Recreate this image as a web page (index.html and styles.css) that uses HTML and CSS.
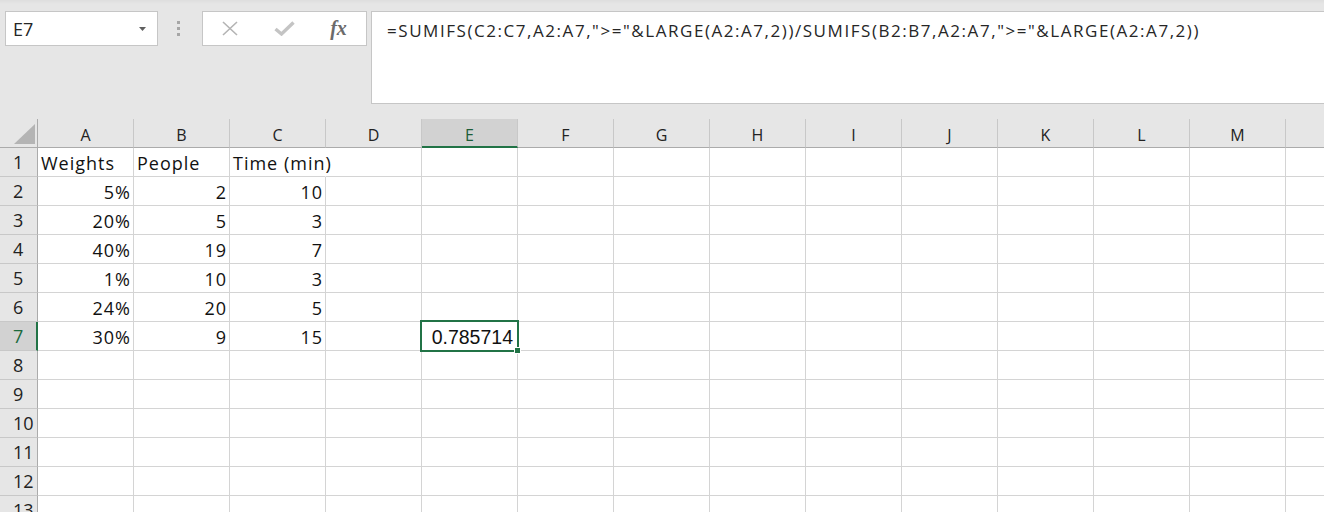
FILE: index.html
```html
<!DOCTYPE html>
<html lang="en">

<head>
    <meta charset="UTF-8">
    <meta name="viewport" content="width=device-width, initial-scale=1.0">
    <title>Book1 - Excel</title>
    <link rel="stylesheet" href="styles.css">
</head>

<body>

    <div class="toolbar">
        <div class="name-box">
            <span class="name-text">E7</span>
            <svg class="drop" width="7" height="4" viewBox="0 0 7 4"><path d="M0 0 H7 L3.5 4 Z" fill="#5f5f5f"/></svg>
        </div>
        <div class="grip">
            <span></span><span></span><span></span>
        </div>
        <div class="fn-box">
            <span class="fn-btn">
                <svg width="16" height="15" viewBox="0 0 16 15"><path d="M1 1 L15 14 M15 1 L1 14" stroke="#b4b4b4" stroke-width="1.6" fill="none"/></svg>
            </span>
            <span class="fn-btn">
                <svg width="21" height="15" viewBox="0 0 21 15"><path d="M1.5 8 L7.5 13 L19.5 1.5" stroke="#c4c4c4" stroke-width="3.4" fill="none"/></svg>
            </span>
            <span class="fn-btn fx">fx</span>
        </div>
        <div class="formula">=SUMIFS(C2:C7,A2:A7,"&gt;="&amp;LARGE(A2:A7,2))/SUMIFS(B2:B7,A2:A7,"&gt;="&amp;LARGE(A2:A7,2))</div>
    </div>

    <div class="sheet" id="sheet"></div>

    <script>
        const columns = ['A', 'B', 'C', 'D', 'E', 'F', 'G', 'H', 'I', 'J', 'K', 'L', 'M', ''];
        const data = {
            1: ['Weights', 'People', 'Time (min)'],
            2: ['5%', '2', '10'],
            3: ['20%', '5', '3'],
            4: ['40%', '19', '7'],
            5: ['1%', '10', '3'],
            6: ['24%', '20', '5'],
            7: ['30%', '9', '15']
        };
        const activeCol = 'E';
        const activeRow = 7;

        function buildSheet() {
            const sheet = document.getElementById('sheet');

            const corner = document.createElement('div');
            corner.className = 'corner';
            corner.innerHTML = '<span class="select-all"></span>';
            sheet.appendChild(corner);

            columns.forEach(col => {
                const head = document.createElement('div');
                head.className = 'col-head';
                if (col === activeCol) head.classList.add('active');
                head.textContent = col;
                sheet.appendChild(head);
            });

            for (let r = 1; r <= 13; r++) {
                const rowHead = document.createElement('div');
                rowHead.className = 'row-head';
                if (r === activeRow) rowHead.classList.add('active');
                rowHead.textContent = r;
                sheet.appendChild(rowHead);

                columns.forEach((col, i) => {
                    const cell = document.createElement('div');
                    cell.className = 'cell';
                    const value = data[r] ? data[r][i] : undefined;
                    if (value !== undefined) {
                        cell.textContent = value;
                        cell.classList.add(r === 1 ? 'text' : 'num');
                        if (r === 1 && i === 2) cell.classList.add('spill');
                    }
                    if (col === activeCol && r === activeRow) {
                        cell.classList.add('num', 'result');
                        cell.innerHTML = '0.785714<span class="selection"><span class="handle"></span></span>';
                    }
                    sheet.appendChild(cell);
                });
            }
        }

        buildSheet();
    </script>

</body>

</html>
```

FILE: styles.css
```css
body {
    margin: 0;
    height: 512px;
    overflow: hidden;
    background-color: #ffffff;
    font-family: 'Open Sans', 'Noto Sans', sans-serif;
    color: #222222;
}

.toolbar {
    height: 119px;
    box-sizing: border-box;
    display: flex;
    align-items: flex-start;
    padding: 11px 0 0 5px;
    background: linear-gradient(#dedede, #e6e6e6 4px);
}

.name-box {
    width: 153px;
    height: 35px;
    box-sizing: border-box;
    border: 1px solid #c6c6c6;
    background-color: #ffffff;
    display: flex;
    align-items: center;
    justify-content: space-between;
    padding: 0 11px 0 7px;
}

.name-text {
    font-size: 18px;
    color: #262626;
}

.drop {
    margin-top: 1px;
}

.grip {
    width: 44px;
    height: 35px;
    box-sizing: border-box;
    padding-right: 4px;
    display: flex;
    flex-direction: column;
    align-items: center;
    justify-content: center;
    gap: 3px;
}

.grip span {
    width: 3px;
    height: 3px;
    background-color: #a6a6a6;
}

.fn-box {
    width: 165px;
    height: 35px;
    box-sizing: border-box;
    border: 1px solid #c6c6c6;
    background-color: #ffffff;
    display: flex;
}

.fn-btn {
    width: 54px;
    display: flex;
    align-items: center;
    justify-content: center;
}

.fn-btn.fx {
    width: 55px;
    font-family: 'Liberation Serif', serif;
    font-style: italic;
    font-weight: bold;
    font-size: 20px;
    color: #6b6b6b;
    padding-bottom: 1px;
}

.formula {
    flex: 1;
    height: 93px;
    margin-left: 4px;
    box-sizing: border-box;
    border: 1px solid #c6c6c6;
    border-right: none;
    background-color: #ffffff;
    padding: 7px 0 0 15px;
    font-size: 17px;
    letter-spacing: 1.55px;
    white-space: nowrap;
    color: #262626;
}

.sheet {
    display: grid;
    grid-template-columns: 38px repeat(13, 96px) 40px;
    grid-auto-rows: 29px;
}

.sheet > div {
    box-sizing: border-box;
    border-right: 1px solid #d4d4d4;
    border-bottom: 1px solid #d4d4d4;
    white-space: nowrap;
}

.sheet > .corner {
    background-color: #e6e6e6;
    border-right: 1px solid #ababab;
    border-bottom: 1px solid #ababab;
    display: flex;
    justify-content: flex-end;
    align-items: flex-end;
    padding: 0 2px 3px 0;
}

.select-all {
    width: 0;
    height: 0;
    border-left: 21px solid transparent;
    border-bottom: 20px solid #b4b4b4;
}

.sheet > .col-head {
    background-color: #e6e6e6;
    border-right: 1px solid #c8c8c8;
    border-bottom: 1px solid #ababab;
    text-align: center;
    font-size: 16px;
    line-height: 28px;
    padding-top: 2px;
    color: #222222;
}

.sheet > .col-head.active {
    background-color: #d2d2d2;
    border-bottom: 2px solid #217346;
    color: #1c5c37;
}

.sheet > .row-head {
    background-color: #e6e6e6;
    border-right: 1px solid #ababab;
    border-bottom: 1px solid #c8c8c8;
    font-size: 18px;
    line-height: 28px;
    padding-left: 13px;
    color: #222222;
}

.sheet > .row-head.active {
    background-color: #d2d2d2;
    border-right: 2px solid #217346;
    color: #1c6b3e;
}

.cell {
    font-size: 18px;
    letter-spacing: 1px;
    line-height: 28px;
    padding: 1px 2px 0 3px;
    color: #111111;
}

.cell.num {
    text-align: right;
}

.cell.spill {
    overflow: visible;
    border-right-color: #ffffff;
    position: relative;
    z-index: 1;
}

.cell.result {
    position: relative;
    font-family: 'Liberation Sans', Arial, sans-serif;
    font-size: 19.5px;
    letter-spacing: 0;
    padding-right: 4px;
}

.selection {
    position: absolute;
    top: -2px;
    left: -2px;
    right: -2px;
    bottom: -2px;
    border: 2px solid #217346;
}

.handle {
    position: absolute;
    right: -4px;
    bottom: -4px;
    width: 5px;
    height: 5px;
    background-color: #217346;
    border: 1px solid #ffffff;
}
```
